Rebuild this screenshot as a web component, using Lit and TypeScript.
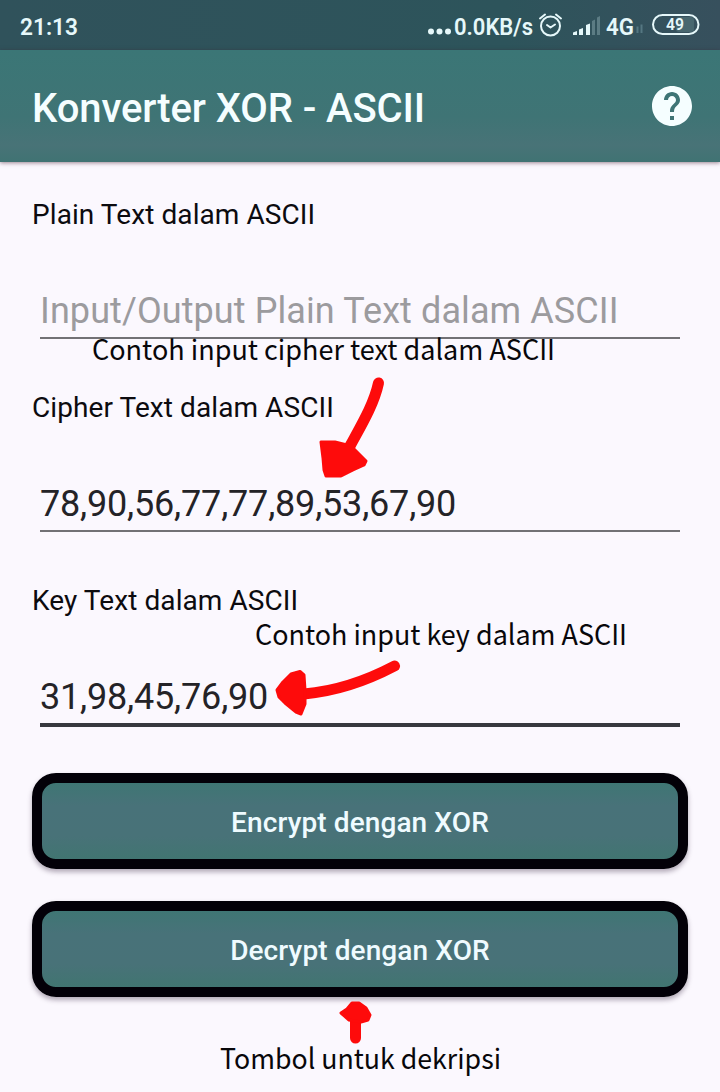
import { LitElement, html, svg, css } from "lit";
import { customElement, property } from "lit/decorators.js";

@customElement("status-bar")
class StatusBar extends LitElement {
  static styles = css`
    :host { display: block; height: 50px; background: linear-gradient(90deg, #30525b, #2d545b 70%, #37505d); }
    svg { display: block; }
    text { font-family: Roboto, "Liberation Sans", sans-serif; font-weight: 600; fill: #e6f8fa; }
  `;
  render() {
    return html`<svg width="720" height="50" viewBox="0 0 720 50">
      <text x="20" y="34.500" font-size="24" textLength="58" lengthAdjust="spacingAndGlyphs">21:13</text>
      <g fill="#e6f8fa">
        <circle cx="431" cy="31.500" r="3"></circle><circle cx="439.500" cy="31.500" r="3"></circle><circle cx="448" cy="31.500" r="3"></circle>
      </g>
      <text x="454" y="34.500" font-size="24" textLength="79" lengthAdjust="spacingAndGlyphs">0.0KB/s</text>
      <g fill="none" stroke="#e6f8fa" stroke-width="2" stroke-linecap="round" stroke-linejoin="round">
        <circle cx="550.500" cy="26" r="9.500"></circle>
        <path d="M540 18.500 545 14.500M556 14.500 561 18.500M547 25l3.500 2.500 4.500-3"></path>
      </g>
      <path fill="#e6f8fa" d="M573 35v-2.500l4-1.500v4zM579 35v-5.500l4-1.500v7zM586 35V25l4-1.500V35z"></path>
      <path fill="#5c7c84" d="M592 35V21l3-1.500V35zM597 35V17.500l3-1.500V35z"></path>
      <text x="606" y="34.500" font-size="24" textLength="28" lengthAdjust="spacingAndGlyphs">4G</text>
      <path fill="#557781" d="M636.500 26.500h2V33h-2zM640.500 24.500h2V33h-2z"></path>
      <rect x="676" y="17" width="18" height="15" rx="3" fill="#48676f"></rect>
      <rect x="653" y="15" width="45.500" height="19" rx="9.500" fill="none" stroke="#e6f8fa" stroke-width="2"></rect>
      <text x="666" y="30" font-size="16" textLength="18" lengthAdjust="spacingAndGlyphs">49</text>
    </svg>`;
  }
}

@customElement("app-header")
class AppHeader extends LitElement {
  static styles = css`
    :host {
      display: flex; align-items: center; justify-content: space-between; box-sizing: border-box;
      height: 112px; padding: 0 24px 0 32px; color: #f5feff;
      background: linear-gradient(180deg, #3b7676, #3f7475 60%, #487377 85%, #407373);
      box-shadow: 0 1px 4px rgba(60, 20, 40, 0.5);
    }
    .title { margin: 6px 0 0; font: 500 40px/48px Roboto, "Liberation Sans", sans-serif; white-space: nowrap; letter-spacing: -0.1px; }
    svg { display: block; width: 48px; height: 48px; }
  `;
  render() {
    return html`<h1 class="title">Konverter XOR - ASCII</h1>
      <svg viewBox="0 0 24 24" fill="#f5feff" aria-label="Bantuan">
        <path d="M12 2C6.480 2 2 6.480 2 12s4.480 10 10 10 10-4.480 10-10S17.520 2 12 2zm1 17h-2v-2h2v2zm2.070-7.750-.9.920C13.450 12.900 13 13.500 13 15h-2v-.5c0-1.100.45-2.100 1.170-2.830l1.240-1.260c.37-.36.59-.86.59-1.410 0-1.100-.9-2-2-2s-2 .9-2 2H8c0-2.210 1.790-4 4-4s4 1.790 4 4c0 .88-.36 1.680-.93 2.250z"></path>
      </svg>`;
  }
}

@customElement("text-entry")
class TextEntry extends LitElement {
  @property() label = "";
  @property() value = "";
  @property() hint = "";
  @property({ type: Boolean, reflect: true }) active = false;
  static styles = css`
    :host { display: block; height: 193px; font-family: Roboto, "Liberation Sans", sans-serif; }
    .label { height: 33px; line-height: 33px; font-size: 28px; letter-spacing: 0.08px; color: #0c0b0f; white-space: nowrap; }
    .field {
      box-sizing: border-box; height: 75px; margin: 33px 8px 0; padding-top: 26px;
      font-size: 36px; line-height: 42px; letter-spacing: -0.18px; color: #242327; white-space: nowrap;
      border-bottom: 2px solid #727175;
    }
    .hint { color: #9c9b9e; letter-spacing: 0.09px; }
    :host([active]) .field { height: 77px; border-bottom: 4px solid #37383e; }
  `;
  render() {
    return html`<div class="label">${this.label}</div>
      <div class="field ${this.value ? "" : "hint"}">${this.value || this.hint}</div>`;
  }
}

@customElement("note-layer")
class NoteLayer extends LitElement {
  static styles = css`
    :host { position: absolute; inset: 0; pointer-events: none; }
    svg { display: block; }
    .note { font-family: "Noto Sans CJK SC", "Open Sans", sans-serif; font-size: 28px; fill: #08070a; }
    .ink { fill: #fe0b0b; stroke: #fe0b0b; stroke-width: 3; stroke-linejoin: round; }
    .stroke { fill: none; stroke: #fe0b0b; stroke-width: 11; stroke-linecap: round; }
  `;
  private notes = [
    { x: 92, y: 360, w: 463, text: "Contoh input cipher text dalam ASCII" },
    { x: 255, y: 645, w: 372, text: "Contoh input key dalam ASCII" },
    { x: 220, y: 1069, w: 281, text: "Tombol untuk dekripsi" },
  ];
  render() {
    return html`<svg width="720" height="1092" viewBox="0 0 720 1092">
      ${this.notes.map((n) => svg`<text class="note" x=${n.x} y=${n.y} textLength=${n.w} lengthAdjust="spacingAndGlyphs">${n.text}</text>`)}
      <path class="stroke" d="M378.500 383C374 404 362 424 350 446"></path>
      <path class="ink" d="M321 442 335 442 351 446 358 453 366 461 364 465 353 470 341 476 326 476 324 470 323 458z"></path>
      <path class="stroke" d="M394.500 666C366 681 338 691 304 694"></path>
      <path class="ink" d="M277 690 283 682 291 674 300 671.500 304 675 305 690 305 704 301 714 296 712 285 703 279 697z"></path>
      <path class="stroke" d="M355.500 1038V1018"></path>
      <path class="ink" d="M341 1013 347 1009 352 1003 359 1003 366 1008 370 1015 368 1020 361 1022 349 1020z"></path>
    </svg>`;
  }
}

@customElement("app-root")
class AppRoot extends LitElement {
  static styles = css`
    :host { display: block; position: relative; width: 720px; height: 1092px; overflow: hidden; background: #fbf8fe; }
    .form { display: flex; flex-direction: column; padding: 36px 32px 0; }
    .actions { display: grid; gap: 32px; margin-top: -4px; }
    .action {
      box-sizing: border-box; height: 96px; width: 100%; padding: 4px 0 0;
      border: 10px solid #030008; border-radius: 24px; color: #effbff;
      background: linear-gradient(180deg, #3f7674, #487279 30%, #487278 70%, #417571);
      font: 500 28px/34px Roboto, "Liberation Sans", sans-serif; letter-spacing: 0.1px;
      box-shadow: 0 3px 5px rgba(40, 20, 50, 0.35);
    }
  `;
  render() {
    return html`<status-bar></status-bar>
      <app-header></app-header>
      <main class="form">
        <text-entry label="Plain Text dalam ASCII" hint="Input/Output Plain Text dalam ASCII"></text-entry>
        <text-entry label="Cipher Text dalam ASCII" value="78,90,56,77,77,89,53,67,90"></text-entry>
        <text-entry label="Key Text dalam ASCII" value="31,98,45,76,90" active></text-entry>
        <div class="actions">
          <button class="action">Encrypt dengan XOR</button>
          <button class="action">Decrypt dengan XOR</button>
        </div>
      </main>
      <note-layer></note-layer>`;
  }
}
